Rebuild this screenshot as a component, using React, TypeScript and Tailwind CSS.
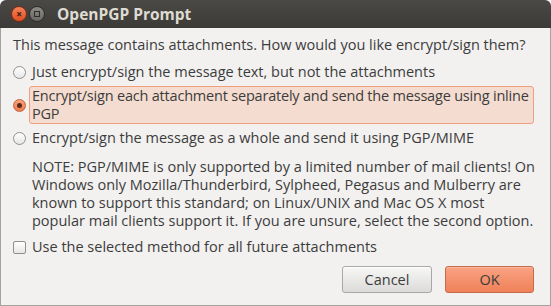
import { useState } from "react";

const font = { fontFamily: '"Open Sans", "Noto Sans", sans-serif' };

function Radio({ checked }: { checked?: boolean }) {
  if (checked) {
    return (
      <span className="flex h-[13px] w-[13px] shrink-0 items-center justify-center rounded-full border border-[#c9603a] bg-gradient-to-b from-[#f7a37f] to-[#ee7a4c]">
        <span className="h-[5px] w-[5px] rounded-full bg-[#5a2a18]" />
      </span>
    );
  }
  return (
    <span className="h-[13px] w-[13px] shrink-0 rounded-full border border-[#8f8f8f] bg-gradient-to-b from-white to-[#e6e6e6]" />
  );
}

export default function App() {
  const [choice, setChoice] = useState(1);
  const options = [
    ["Just encrypt/sign the message text, but not the attachments"],
    ["Encrypt/sign each attachment separately and send the message using inline", "PGP"],
    ["Encrypt/sign the message as a whole and send it using PGP/MIME"],
  ];

  return (
    <div
      className="flex h-[306px] w-[551px] flex-col overflow-hidden rounded-t-[6px] bg-[#f2f1f0] text-[14.5px] leading-[18px] text-[#3c3c3c]"
      style={font}
    >
      {/* Title bar */}
      <div className="flex h-[28px] shrink-0 items-center bg-gradient-to-b from-[#4a4945] to-[#3c3b37] pl-[11px]">
        <div className="flex items-center gap-[2px]">
          <span className="flex h-[16px] w-[16px] items-center justify-center rounded-full border border-[#7a2d12] bg-gradient-to-b from-[#f5825a] to-[#dc4e1f] text-[10px] font-bold leading-none text-[#3a160a]">
            ×
          </span>
          <span className="flex h-[16px] w-[16px] items-center justify-center rounded-full border border-[#2e2d2a] bg-gradient-to-b from-[#8c8a85] to-[#6a6864]">
            <span className="h-[6px] w-[6px] border border-[#2e2d2a]" />
          </span>
        </div>
        <span className="ml-[12px] text-[15.5px] font-bold text-[#dfdbd2]">OpenPGP Prompt</span>
      </div>

      {/* Body */}
      <div className="flex flex-1 flex-col whitespace-nowrap border-x border-b border-[#a4a29f] px-[12px] pt-[8px]">
        <p>This message contains attachments. How would you like encrypt/sign them?</p>

        <div className="mt-[8px] flex flex-col gap-[4px]">
          {options.map((lines, i) => (
            <button
              key={i}
              onClick={() => setChoice(i)}
              className="flex items-center gap-[6px] text-left"
            >
              <Radio checked={choice === i} />
              <span
                className={
                  choice === i
                    ? "-ml-[3px] w-[505px] rounded-[3px] border border-[#f0a07e] bg-[#f4dcd0] pl-[2px] tracking-[-0.2px]"
                    : "flex-1 py-[1px]"
                }
              >
                {lines.map((l, j) => (
                  <span key={j} className="block">
                    {l}
                  </span>
                ))}
              </span>
            </button>
          ))}
        </div>

        <p className="mt-[10px] pl-[19px]">
          NOTE: PGP/MIME is only supported by a limited number of mail clients! On
          <br />
          Windows only Mozilla/Thunderbird, Sylpheed, Pegasus and Mulberry are
          <br />
          known to support this standard; on Linux/UNIX and Mac OS X most
          <br />
          popular mail clients support it. If you are unsure, select the second option.
        </p>

        <label className="mt-[8px] flex items-center gap-[6px]">
          <span className="h-[13px] w-[13px] shrink-0 rounded-[2px] border border-[#8f8f8f] bg-gradient-to-b from-white to-[#e6e6e6]" />
          <span>Use the selected method for all future attachments</span>
        </label>

        <div className="mt-auto mb-[12px] flex justify-end gap-[13px] pr-[4px]">
          <button className="h-[27px] w-[90px] rounded-[3px] border border-[#a9a8a6] bg-gradient-to-b from-[#f7f7f6] to-[#dcdbd9] text-[#3c3c3c] shadow-[inset_0_1px_0_white]">
            Cancel
          </button>
          <button className="h-[27px] w-[89px] rounded-[3px] border border-[#c66b47] bg-gradient-to-b from-[#f9a283] to-[#ef8158] text-[#3c3c3c] shadow-[inset_0_1px_0_#fbb9a0]">
            OK
          </button>
        </div>
      </div>
    </div>
  );
}
